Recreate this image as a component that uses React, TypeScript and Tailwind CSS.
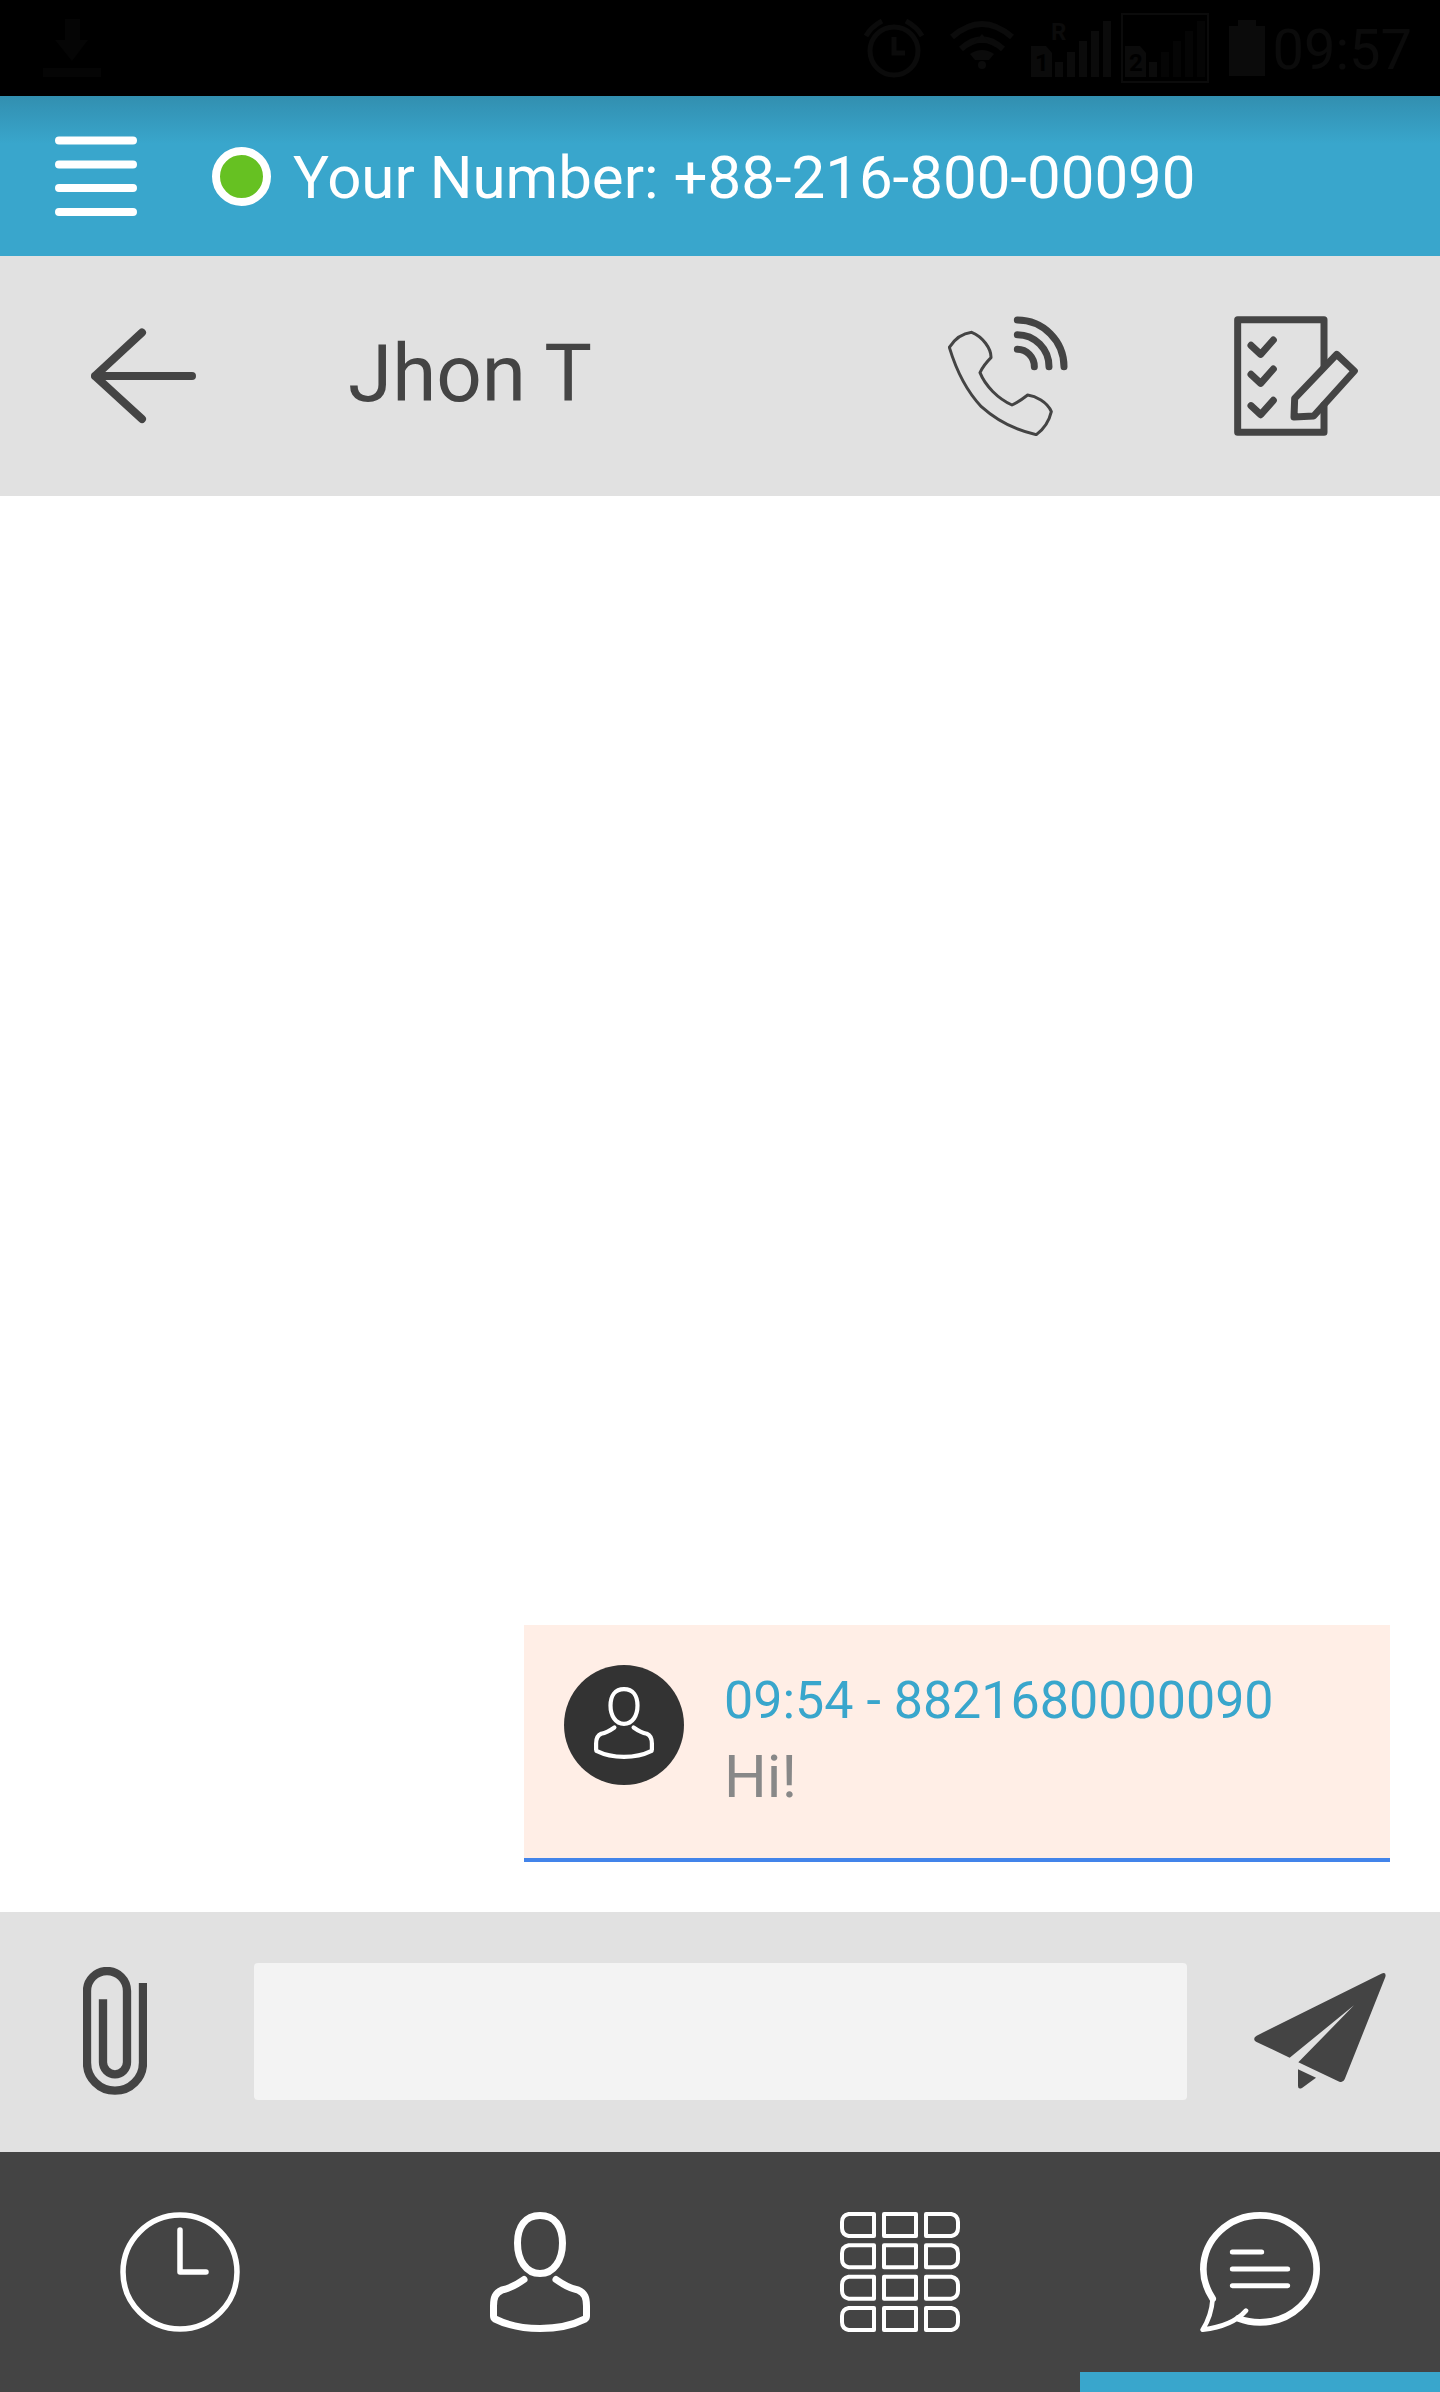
import { useState } from "react";

const messages = [
  { id: 1, time: "09:54", number: "8821680000090", text: "Hi!" },
];

const tabs = [
  { id: "recents", label: "Recents", Icon: ClockIcon },
  { id: "contacts", label: "Contacts", Icon: ContactIcon },
  { id: "keypad", label: "Keypad", Icon: KeypadIcon },
  { id: "messages", label: "Messages", Icon: ChatIcon },
];

function DownloadIcon() {
  return (
    <svg viewBox="0 0 58 58" className="w-[58px] h-[58px]" fill="#050505">
      <path d="M22 0h15v21h8L29 42 12 21h10Z" />
      <path d="M0 49h58v9H0Z" />
    </svg>
  );
}

function AlarmIcon() {
  return (
    <svg
      viewBox="0 0 62 60"
      className="w-[62px] h-[60px]"
      fill="none"
      stroke="#0b0b0b"
      strokeWidth="5"
    >
      <circle cx="31" cy="33" r="24" />
      <path d="M31 19v16h11" />
      <path d="M3 18Q8 9 19 3M59 18Q54 9 43 3" />
    </svg>
  );
}

function WifiIcon() {
  return (
    <svg
      viewBox="0 0 66 60"
      className="w-[66px] h-[60px]"
      fill="none"
      stroke="#0b0b0b"
      strokeWidth="6"
    >
      <path d="M3 19Q33-7 63 19M12 31Q33 12 54 31" />
      <path d="M21 36Q33 28 45 36L40 42H26Z" fill="#0b0b0b" stroke="none" />
      <path d="M33 16l8 9H25Z" fill="#0b0b0b" stroke="none" />
      <circle cx="33" cy="47" r="4" fill="#0b0b0b" stroke="none" />
    </svg>
  );
}

function SignalIcon({ sim, roaming }: { sim: string; roaming?: boolean }) {
  return (
    <svg viewBox="0 0 80 58" className="w-[80px] h-[58px]" fill="#0b0b0b">
      <path d="M0 27h15l6 7v24H0Z" />
      <text x="4" y="52" fontSize="24" fontWeight="700" fill="#000000">
        {sim}
      </text>
      {roaming && (
        <text x="20" y="21" fontSize="24" fontWeight="700">
          R
        </text>
      )}
      <path d="M24 43h8v15h-8Z" />
      <path
        d="M36 33h8v25h-8ZM48 22h8v36h-8ZM60 12h8v46h-8ZM72 2h8v56h-8Z"
        fill={roaming ? "#0b0b0b" : "#050505"}
      />
    </svg>
  );
}

function BatteryIcon() {
  return (
    <svg viewBox="0 0 36 56" className="w-[36px] h-[56px]" fill="#0b0b0b">
      <path d="M9 0h18v6h9v50H0V6h9Z" />
    </svg>
  );
}

function MenuIcon() {
  return (
    <svg
      viewBox="0 0 82 80"
      className="w-[82px] h-[80px]"
      stroke="white"
      strokeWidth="8"
      strokeLinecap="round"
    >
      <path d="M4 4.5h74M4 28.5h74M4 52h74M4 76h74" />
    </svg>
  );
}

function BackIcon() {
  return (
    <svg
      viewBox="0 0 106 96"
      className="w-[106px] h-24"
      fill="none"
      stroke="#444444"
      strokeWidth="8"
      strokeLinecap="round"
      strokeLinejoin="round"
    >
      <path d="M51 4.5 4 48l47 43M4 48h97" />
    </svg>
  );
}

function CallIcon() {
  return (
    <svg
      viewBox="0 0 360 360"
      className="w-[120px] h-[120px]"
      fill="none"
      stroke="#444444"
      strokeLinecap="round"
      strokeLinejoin="round"
    >
      <path
        strokeWidth="9"
        d="M71 49Q30 54 4 94C30 180 66 236 100 272C150 317 200 342 265 356Q300 330 310 287C298 258 262 240 239 237Q215 256 192 267C150 248 112 210 96 170Q106 148 129 125C130 98 104 62 71 49Z"
      />
      <path
        strokeWidth="21"
        d="M208 12A140 140 0 0 1 348 152M208 56A95 96 0 0 1 303 152M208 100A51 52 0 0 1 259 152"
      />
    </svg>
  );
}

function NoteIcon() {
  return (
    <svg
      viewBox="0 0 372 360"
      className="w-[124px] h-[120px]"
      fill="none"
      stroke="#444444"
      strokeWidth="21"
      strokeLinecap="round"
      strokeLinejoin="round"
    >
      <path d="M270 150V11H11v338h259v-82" />
      <path d="m308 115 53 50-122 135-59 3 2-56Z" />
      <path d="m51 88 29 27 38-43M51 175l29 27 38-43M51 269l29 27 38-43" />
    </svg>
  );
}

function PersonIcon({ className }: { className: string }) {
  return (
    <svg
      viewBox="0 0 100 120"
      className={className}
      fill="none"
      stroke="white"
      strokeWidth="7"
      strokeLinecap="round"
      strokeLinejoin="round"
    >
      <path d="M50 3.5C65 3.5 72.5 15 72.5 31C72.5 48 64 61.500 50 61.500C36 61.500 27.5 48 27.5 31C27.5 15 35 3.500 50 3.500Z" />
      <path d="M34 67.5Q22 76 12 78C5 81 3.500 86 3.500 94V104Q3.500 106 5 107Q24 116.500 50 116.500Q76 116.500 95 107Q96.500 106 96.500 104V94C96.500 86 95 81 88 78Q78 76 66 67.500" />
    </svg>
  );
}

function AttachIcon() {
  return (
    <svg
      viewBox="0 0 192 384"
      className="w-16 h-32"
      fill="none"
      stroke="#444444"
      strokeWidth="25"
    >
      <path d="M180 48V287A84 84 0 0 1 12 287V72A60 60 0 0 1 132 72V286A36 36 0 0 1 60 286V97" />
    </svg>
  );
}

function SendIcon() {
  return (
    <svg viewBox="0 0 396 348" className="w-[132px] h-[116px]" fill="#444444">
      <path d="M8 188Q-6 197 6 206L107 254 300 97 133 268 256 326Q267 330 272 319L394 12Q398-4 382 2Z" />
      <path d="M132 289 186 314 144 345Q132 350 132 339Z" />
    </svg>
  );
}

function ClockIcon() {
  return (
    <svg
      viewBox="0 0 120 120"
      className="w-[120px] h-[120px]"
      fill="none"
      stroke="white"
      strokeWidth="5.5"
      strokeLinecap="round"
      strokeLinejoin="round"
    >
      <circle cx="60" cy="60" r="57" />
      <path d="M60 18v42h26" />
    </svg>
  );
}

function ContactIcon() {
  return <PersonIcon className="w-[100px] h-[120px]" />;
}

function KeypadIcon() {
  return (
    <svg
      viewBox="0 0 360 360"
      className="w-[120px] h-[120px]"
      fill="none"
      stroke="white"
      strokeWidth="12"
      strokeLinejoin="round"
    >
      {[0, 94, 188, 282].map((y) => (
        <g key={y} transform={`translate(0 ${y})`}>
          <path d="M102 6H26Q6 10 6 30V48Q6 68 26 72H102Z" />
          <path d="M132 6h96v66h-96Z" />
          <path d="M258 6h76Q354 10 354 30V48Q354 68 334 72H258Z" />
        </g>
      ))}
    </svg>
  );
}

function ChatIcon() {
  return (
    <svg
      viewBox="0 0 360 360"
      className="w-[120px] h-[120px]"
      fill="none"
      stroke="white"
      strokeLinecap="round"
      strokeLinejoin="round"
    >
      <path
        strokeWidth="20"
        d="M38 260C20 232 10 204 10 172C10 82 86 10 180 10C274 10 350 82 350 171C350 260 274 331 180 331C156 331 135 327 115 319"
      />
      <path
        strokeWidth="14"
        d="M38 260C36 290 26 325 8 353C60 347 108 330 138 296"
      />
      <path strokeWidth="15" d="M97 120h88M97 171h166M97 221h166" />
    </svg>
  );
}

export default function App() {
  const [draft, setDraft] = useState("");
  const [activeTab, setActiveTab] = useState("messages");

  const handleSubmit = (e: React.FormEvent<HTMLFormElement>) => {
    e.preventDefault();
    setDraft("");
  };

  return (
    <div className="flex min-h-screen flex-col bg-white font-['Roboto',sans-serif]">
      {/* System status bar */}
      <div className="flex h-24 items-center justify-between bg-black pl-[43px] pr-7">
        <DownloadIcon />
        <div className="flex items-center">
          <AlarmIcon />
          <div className="ml-6 mr-4">
            <WifiIcon />
          </div>
          <SignalIcon sim="1" roaming />
          <div className="ml-2.5 mr-5 border-2 border-[#0b0b0b] px-0.5 py-1">
            <SignalIcon sim="2" />
          </div>
          <BatteryIcon />
          <span className="ml-2 pt-1 text-[56px] leading-16 text-[#0b0b0b]">
            09:57
          </span>
        </div>
      </div>

      {/* Account header */}
      <header className="flex h-40 items-center bg-[#39a6cc] bg-linear-to-b from-[#328fb0] to-[#39a6cc] to-30% pl-[55px]">
        <button type="button" aria-label="Menu" className="cursor-pointer">
          <MenuIcon />
        </button>
        <span className="ml-[75px] h-[59px] w-[59px] shrink-0 rounded-full border-8 border-white bg-[#66c122]" />
        <p className="ml-[22px] pt-1 text-[60px] leading-18 text-white">
          Your Number: +88-216-800-00090
        </p>
      </header>

      {/* Conversation header */}
      <div className="flex h-60 items-center bg-[#e1e1e1] pl-[91px] pr-[82px]">
        <button type="button" aria-label="Back" className="cursor-pointer">
          <BackIcon />
        </button>
        <h1 className="ml-[151px] flex-1 pb-1 text-[80px] leading-24 text-[#444444]">
          Jhon T
        </h1>
        <div className="flex items-center gap-[166px]">
          <button type="button" aria-label="Call" className="cursor-pointer">
            <CallIcon />
          </button>
          <button type="button" aria-label="Notes" className="cursor-pointer">
            <NoteIcon />
          </button>
        </div>
      </div>

      <main className="flex flex-1 flex-col items-end justify-end gap-10 p-[50px]">
        {messages.map((message) => (
          <article
            key={message.id}
            className="flex w-[866px] max-w-full gap-10 border-b-4 border-[#4384ea] bg-[#ffeee6] px-10 pt-10 pb-[45px]"
          >
            <div className="flex h-[120px] w-[120px] shrink-0 justify-center rounded-full bg-[#333333] pt-[22px]">
              <PersonIcon className="w-[60px] h-[72px]" />
            </div>
            <div className="flex flex-col gap-1">
              <p className="text-[52px] leading-18 text-[#39a6cc]">
                {message.time} - {message.number}
              </p>
              <p className="text-[60px] leading-18 text-[#888888]">
                {message.text}
              </p>
            </div>
          </article>
        ))}
      </main>

      {/* Message composer */}
      <form
        onSubmit={handleSubmit}
        className="flex h-60 items-center bg-[#e1e1e1] pb-0.5 pl-[83px] pr-[54px]"
      >
        <button type="button" aria-label="Attach file" className="cursor-pointer">
          <AttachIcon />
        </button>
        <input
          type="text"
          aria-label="Message"
          value={draft}
          onChange={(e) => setDraft(e.target.value)}
          className="ml-[107px] mr-[67px] h-[137px] min-w-0 flex-1 rounded bg-[#f3f3f3] px-8 text-[60px] text-[#444444] outline-none"
        />
        <button type="submit" aria-label="Send" className="cursor-pointer">
          <SendIcon />
        </button>
      </form>

      <nav className="grid h-60 grid-cols-4 bg-[#444444]">
        {tabs.map(({ id, label, Icon }) => (
          <button
            key={id}
            type="button"
            aria-label={label}
            onClick={() => setActiveTab(id)}
            className={
              activeTab === id
                ? "flex cursor-pointer items-center justify-center border-b-20 border-[#39a6cc] pt-5"
                : "flex cursor-pointer items-center justify-center"
            }
          >
            <Icon />
          </button>
        ))}
      </nav>
    </div>
  );
}
